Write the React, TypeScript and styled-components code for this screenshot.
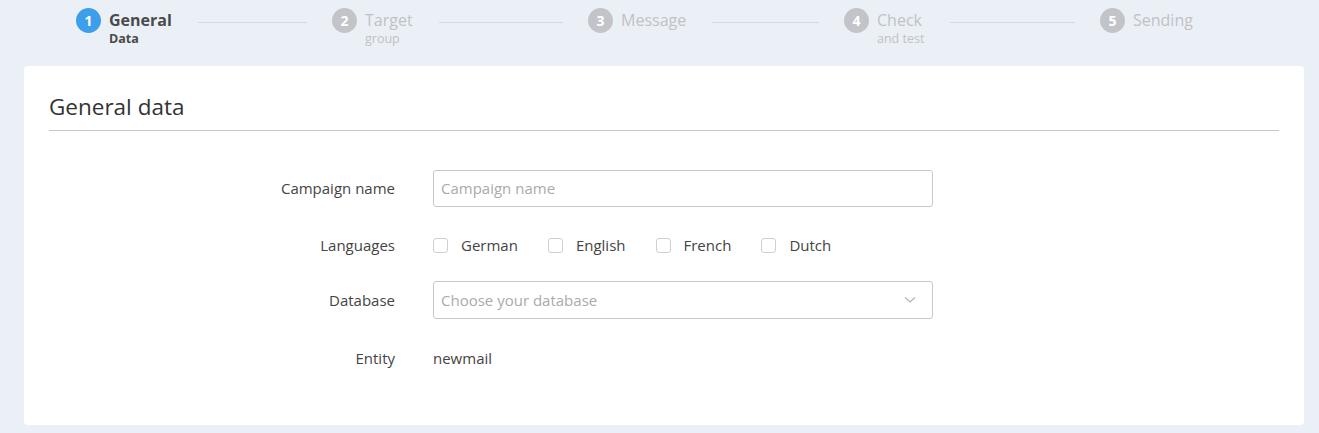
import React from "react";
import styled, { createGlobalStyle } from "styled-components";

const Global = createGlobalStyle`
  html, body { margin: 0; padding: 0; }
  body {
    background: #ebf0f7;
    font-family: "Open Sans", "Liberation Sans", sans-serif;
    color: #444;
  }
  * { box-sizing: border-box; }
`;

const Page = styled.div`
  width: 1319px;
  min-height: 433px;
  padding: 0 15px 0 24px;
`;

const Stepper = styled.div`
  display: flex;
  height: 66px;
  padding: 8px 0 0 52px;
`;

const Step = styled.div`
  flex: 0 0 256px;
  display: flex;
  align-items: flex-start;
`;

const Circle = styled.div<{ $active?: boolean }>`
  flex: 0 0 25px;
  width: 25px;
  height: 25px;
  border-radius: 50%;
  background: ${(p) => (p.$active ? "#3d9fe9" : "#c2c4c7")};
  color: #fff;
  font-size: 14px;
  font-weight: 700;
  display: flex;
  align-items: center;
  justify-content: center;
  line-height: 1;
`;

const StepText = styled.div`
  margin-left: 8px;
  padding-top: 2px;
  display: flex;
  flex-direction: column;
`;

const StepTitle = styled.span<{ $active?: boolean }>`
  font-size: 16px;
  line-height: 20px;
  font-weight: ${(p) => (p.$active ? 700 : 400)};
  color: ${(p) => (p.$active ? "#4a4a4a" : "#c0c2c5")};
  white-space: nowrap;
`;

const StepSub = styled.span<{ $active?: boolean }>`
  font-size: 12.5px;
  line-height: 17px;
  font-weight: ${(p) => (p.$active ? 700 : 400)};
  color: ${(p) => (p.$active ? "#4a4a4a" : "#c0c2c5")};
  white-space: nowrap;
`;

const Line = styled.div`
  flex: 1;
  height: 1px;
  background: #d6d9dd;
  margin: 14px 25px 0 26px;
`;

const Card = styled.div`
  width: 1280px;
  background: #fff;
  border-radius: 4px;
  padding: 26px 25px 50px;
`;

const Heading = styled.h2`
  margin: 0;
  font-size: 22.5px;
  line-height: 30px;
  font-weight: 400;
  color: #333;
  padding-bottom: 8px;
  border-bottom: 1px solid #c8c8c8;
`;

const Form = styled.div`
  display: grid;
  grid-template-columns: 346px 500px;
  column-gap: 38px;
  row-gap: 18px;
  margin-top: 38px;
`;

const Label = styled.div<{ $shift?: number }>`
  height: 38px;
  display: flex;
  align-items: center;
  justify-content: flex-end;
  font-size: 15px;
  color: #444;
  padding-top: ${(p) => p.$shift ?? 0}px;
`;

const Field = styled.div<{ $shift?: number }>`
  height: 38px;
  display: flex;
  align-items: center;
  font-size: 15px;
  color: #444;
  padding-top: ${(p) => p.$shift ?? 0}px;
`;

const Input = styled.input`
  width: 500px;
  height: 37px;
  border: 1px solid #c8c8c8;
  border-radius: 3px;
  padding: 0 7px;
  font-family: inherit;
  font-size: 15px;
  color: #444;
  outline: none;
  &::placeholder { color: #aaa; }
`;

const Select = styled.div`
  width: 500px;
  height: 38px;
  border: 1px solid #c8c8c8;
  border-radius: 3px;
  padding: 0 16px 0 7px;
  display: flex;
  align-items: center;
  justify-content: space-between;
  color: #aaa;
  font-size: 15px;
`;

const Checks = styled.div`
  display: flex;
  align-items: center;
  gap: 30px;
`;

const CheckItem = styled.label`
  display: flex;
  align-items: center;
  gap: 13px;
  font-size: 15px;
  color: #444;
`;

const Box = styled.span`
  width: 15px;
  height: 15px;
  border: 1px solid #cfcfcf;
  border-radius: 3px;
  background: #fff;
  display: inline-block;
`;

const steps = [
  { n: 1, title: "General", sub: "Data", active: true },
  { n: 2, title: "Target", sub: "group" },
  { n: 3, title: "Message" },
  { n: 4, title: "Check", sub: "and test" },
  { n: 5, title: "Sending" },
];

export default function App() {
  return (
    <Page>
      <Global />
      <Stepper>
        {steps.map((s, i) => (
          <Step key={s.n}>
            <Circle $active={s.active}>{s.n}</Circle>
            <StepText>
              <StepTitle $active={s.active}>{s.title}</StepTitle>
              {s.sub && <StepSub $active={s.active}>{s.sub}</StepSub>}
            </StepText>
            {i < steps.length - 1 && <Line />}
          </Step>
        ))}
      </Stepper>
      <Card>
        <Heading>General data</Heading>
        <Form>
          <Label>Campaign name</Label>
          <Field>
            <Input placeholder="Campaign name" />
          </Field>
          <Label $shift={2}>Languages</Label>
          <Field $shift={2}>
            <Checks>
              {["German", "English", "French", "Dutch"].map((l) => (
                <CheckItem key={l}>
                  <Box />
                  {l}
                </CheckItem>
              ))}
            </Checks>
          </Field>
          <Label>Database</Label>
          <Field>
            <Select>
              <span>Choose your database</span>
              <svg width="12" height="8" viewBox="0 0 12 8">
                <path d="M1 1.5 L6 6 L11 1.5" fill="none" stroke="#b5b5b5" strokeWidth="1.3" />
              </svg>
            </Select>
          </Field>
          <Label $shift={3}>Entity</Label>
          <Field $shift={3}>newmail</Field>
        </Form>
      </Card>
    </Page>
  );
}
